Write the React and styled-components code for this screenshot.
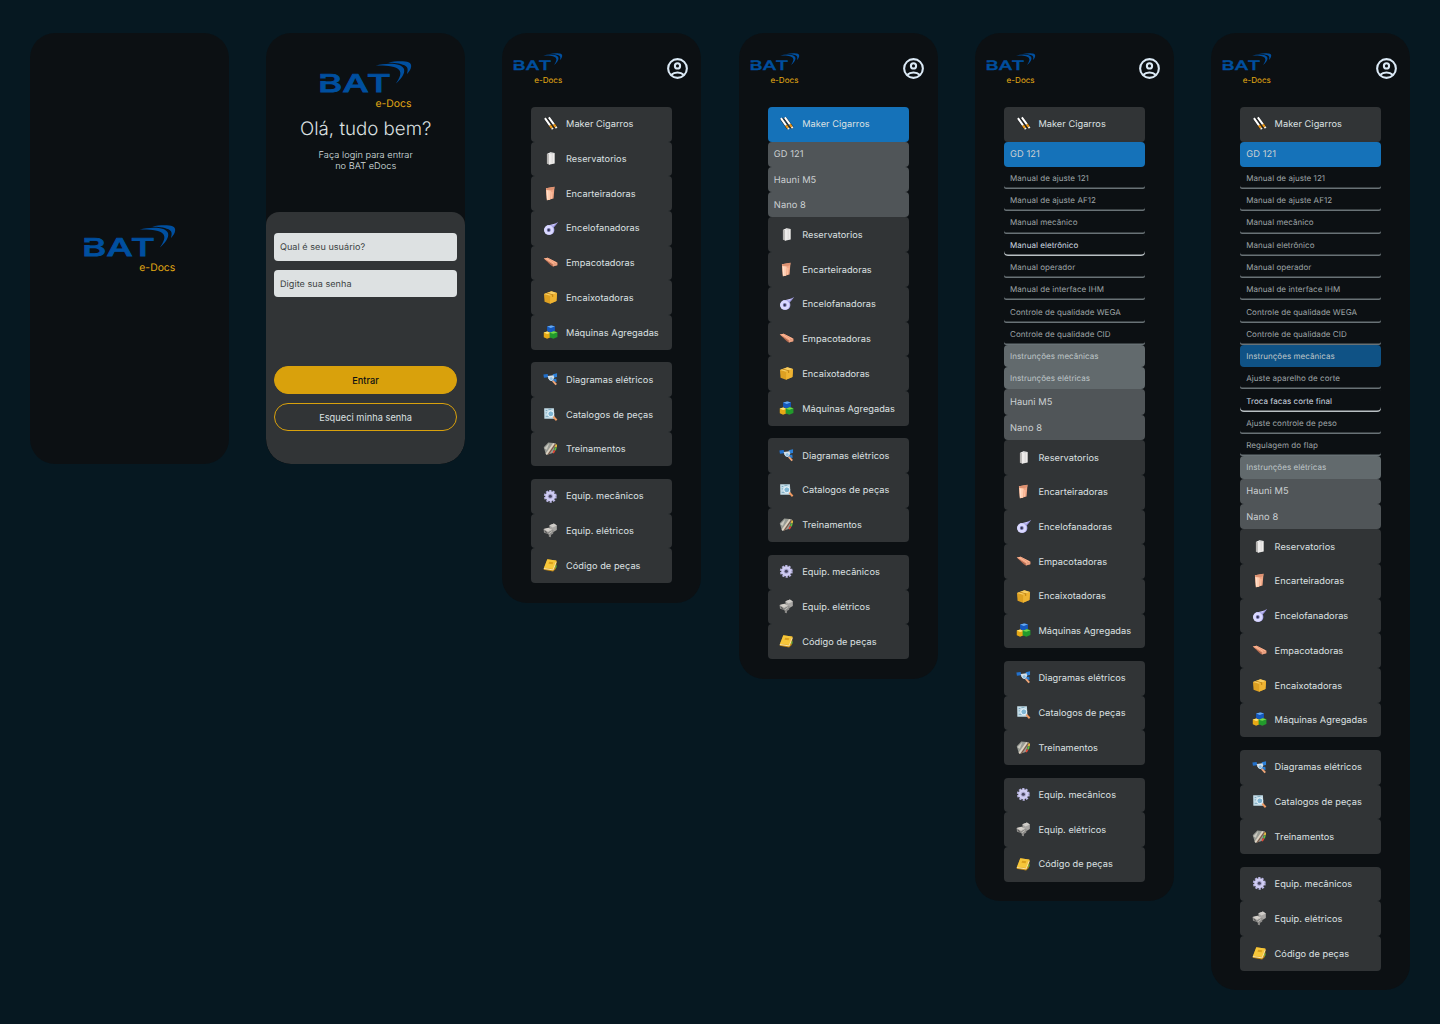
import React from "react";
import styled, { createGlobalStyle } from "styled-components";

const Global = createGlobalStyle`
  *, *::before, *::after { box-sizing: border-box; }
  body { margin: 0; background: #061821; }
  button { font: inherit; letter-spacing: inherit; }
`;

const Board = styled.main`
  width: 1440px;
  height: 1024px;
  padding: 33px 0 0 30px;
  display: flex;
  align-items: flex-start;
  gap: 37.2px;
  overflow: hidden;
  background: #061821;
  font-family: Inter, "Liberation Sans", sans-serif;
  font-size: 9.5px;
  letter-spacing: 0.05px;
  color: #dde1e2;
  text-rendering: geometricPrecision;
`;

const Phone = styled.section`
  flex: none;
  width: 199px;
  height: ${(p) => (p.$h ? `${p.$h}px` : "auto")};
  border-radius: 25px;
  background: #0c1013;
  overflow: hidden;
  display: flex;
  flex-direction: column;
`;

const Brand = styled.div`
  display: flex;
  flex-direction: column;
  align-items: flex-end;
  width: ${(p) => p.$w}px;
  margin: ${(p) => p.$margin || "0"};
  svg { display: block; overflow: visible; }
`;

const BrandName = styled.span`
  color: #e3aa14;
  font-size: ${(p) => p.$size}px;
  line-height: ${(p) => p.$lh}px;
  margin-top: ${(p) => p.$top}px;
  margin-right: 0.5px;
  letter-spacing: 0;
`;

const Hero = styled.div`
  height: 178.6px;
  text-align: center;
`;

const Title = styled.h1`
  margin: 7.9px 0 0;
  font-size: 18.7px;
  line-height: 24px;
  font-weight: 300;
  letter-spacing: 0;
`;

const Lead = styled.p`
  margin: 8.6px 0 0;
  font-size: 9.2px;
  line-height: 11px;
  font-weight: 300;
`;

const LoginPanel = styled.form`
  flex: 1;
  padding: 21.7px 8px 0 7.8px;
  border-radius: 13px 13px 25px 25px;
  background: #313436;
  display: flex;
  flex-direction: column;
`;

const Field = styled.div`
  height: 27.6px;
  margin-bottom: 9px;
  padding: 1.4px 6px 0;
  display: flex;
  align-items: center;
  border-radius: 4px;
  background: #dde1e2;
  color: #3a3f41;
  font-size: 9.05px;
`;

const Pill = styled.button`
  height: 27.8px;
  margin: ${(p) => p.$top}px 0 0;
  padding: 0;
  border: 1px solid #d9a10c;
  border-radius: 14px;
  background: ${(p) => (p.$filled ? "#d9a10c" : "transparent")};
  color: ${(p) => (p.$filled ? "#0c1013" : "#dde1e2")};
  font-size: 9.2px;
  font-weight: ${(p) => (p.$filled ? 500 : 400)};
`;

const TopBar = styled.header`
  height: 73.8px;
  padding: 20px 11.3px 0 11px;
  display: flex;
  align-items: flex-start;
  justify-content: space-between;
`;

const UserIcon = styled.svg`
  margin-top: 3px;
  display: block;
`;

const Menu = styled.nav`
  width: 141px;
  margin: 0 0 19.5px 29.1px;
  display: flex;
  flex-direction: column;
  gap: 12.5px;
`;

const Group = styled.div`
  display: flex;
  flex-direction: column;
`;

const Category = styled.div`
  height: 34.72px;
  padding-left: 11.7px;
  display: flex;
  align-items: center;
  gap: 7.3px;
  border-radius: 4px;
  background: ${(p) => (p.$active ? "#1572b9" : "#313436")};
  font-size: 9.2px;
  svg { flex: none; }
`;

const CategoryName = styled.span`
  padding-top: 1.3px;
`;

const Machine = styled.div`
  height: 25.3px;
  padding: 1.4px 0 0 6.2px;
  display: flex;
  align-items: center;
  border-radius: 4px;
  background: ${(p) => (p.$active ? "#1572b9" : "#505558")};
  color: #cbd0d2;
  font-size: 9.3px;
`;

const Doc = styled.div`
  height: 22.27px;
  padding-left: 6.2px;
  display: flex;
  align-items: center;
  border-radius: ${(p) => (p.$bg || p.$on ? 4 : 2)}px;
  box-shadow: ${(p) => (p.$bg ? "none" : `inset 0 -1.5px 0 ${p.$on ? "#b9c0c3" : "#697276"}`)};
  background: ${(p) => p.$bg || "transparent"};
  color: ${(p) => (p.$on ? "#d0dce2" : p.$bg ? "#bfc6c8" : "#9fa5a7")};
  font-size: 8px;
`;

const BLUE = "#004f9f";

function Logo({ width }) {
  return (
    <svg width={width} height={width * 0.345} viewBox="161 92 278 96" aria-label="BAT">
      <text
        transform="translate(0 185.5) scale(1.5 1)"
        x="105 154.2 203.2"
        fill={BLUE}
        stroke={BLUE}
        strokeWidth="2.4"
        fontFamily="Inter, sans-serif"
        fontWeight="500"
        fontSize="74"
      >
        BAT
      </text>
      <path d="M158 145h24v7h-24z" fill="#0c1013" />
      <path
        d="M331 106C355 99 385 98 402 104C424 112 424 132 392 160C404 142 410 129 402 119C392 107 360 105 331 106z"
        fill={BLUE}
      />
      <path
        d="M369 97C390 92 420 92 430 96C443 101 440 117 425 132C430 118 428 110 418 105C405 98 385 97 369 97z"
        fill={BLUE}
      />
    </svg>
  );
}

function BigBrand({ margin }) {
  return (
    <Brand $w={92.5} $margin={margin}>
      <Logo width={92.5} />
      <BrandName $size={10.4} $lh={12} $top={4.7}>e-Docs</BrandName>
    </Brand>
  );
}

const drawings = {
  cigar: (
    <>
      <path d="M3.2 3.4l7.6 10.8M6.8 2.6l8 11" stroke="#1c1d1e" strokeWidth="3.2" />
      <path d="M3 3.2l5.2 7.4M7 2.4l5.2 7.2" stroke="#fff" strokeWidth="2.1" />
      <path d="M8.2 10.6l2 2.8M12.2 9.6l1.8 2.5" stroke="#ef9b18" strokeWidth="2.3" />
      <path d="M10.2 13.4l.8 1.2M14 12.1l1 1.4" stroke="#f5efe4" strokeWidth="2.1" />
    </>
  ),
  book: (
    <>
      <path d="M5 4l3-1v12l-3-1z" fill="#b5b4b2" />
      <path d="M7 3.6l6-.6v10.8l-6 1.4z" fill="#eeeceb" />
      <path d="M5 4l3.6-1.7 4.4.7-5.5.8z" fill="#fff" />
      <path d="M10.4 3.6v10.6" stroke="#d2d0ce" strokeWidth=".7" />
    </>
  ),
  carton: (
    <>
      <path d="M4 3.2l8.8-1.4-1 12L5 15.6z" fill="#f0a585" />
      <path d="M4 3.2l5 1-.6 11L5 15.6z" fill="#ffcdb0" />
      <path d="M4 3.2l8.8-1.4-.3 2.4L9 5.6 4.1 4.8z" fill="#dd9171" />
      <path d="M5.8 6v8.6" stroke="#ffe3d0" strokeWidth="1" />
      <path d="M10.2 7l-.5 7" stroke="#ffc5a6" strokeWidth="1" />
    </>
  ),
  tape: (
    <>
      <path d="M5 5.4l6-.6L16.6 2l-3.4 4.4-2 1.8z" fill="#a09be0" />
      <path d="M8 5l6-1.4-2.4 2.4z" fill="#cfccff" />
      <circle cx="7.6" cy="10.2" r="5.1" fill="#aaa6e8" />
      <circle cx="6.9" cy="10.3" r="4.9" fill="#dad9ff" />
      <circle cx="6.9" cy="10.3" r="2" fill="#7774b3" />
      <circle cx="6.9" cy="10.3" r="1.1" fill="#303346" />
    </>
  ),
  pack: (
    <>
      <path d="M1.8 4.6l4-.9L15.8 9v2.6l-4.6 1.2L9 11.6z" fill="#b56b50" />
      <path d="M1.8 4.6l4-.9 9.8 5.1-4.6 1.8z" fill="#ffb794" />
      <path d="M3 5l8 4.8M5.4 4.2l7.8 5" stroke="#e0906f" strokeWidth=".7" />
      <path d="M11 10.6l4.6-1.8v2.7l-4.4 1.2z" fill="#e9a283" />
    </>
  ),
  box: (
    <>
      <path d="M2 5l7.6-2.6L15.4 4l-.6 8.4-6.6 2.8L2.6 13z" fill="#dda022" />
      <path d="M2 5l7.6-2.6L15.4 4 8.4 6.8z" fill="#f7cd62" />
      <path d="M8.4 6.8l7-2.8-.6 8.4-6.6 2.8z" fill="#eeb332" />
      <path d="M5 3.9l6.4 1.7.1 2.2-1 .4V6.1L4.2 4.3z" fill="#b87a0d" />
    </>
  ),
  cubes: (
    <>
      <path d="M5.2 2.6l4.2-1.2 3.8 1v5L9 9 5.2 7.4z" fill="#1559bd" />
      <path d="M5.2 2.6l4.2-1.2 3.8 1L9 4z" fill="#66aaf2" />
      <path d="M1.8 8.8l3.6-1.2 3.4 1.6v4.4L5.2 15l-3.4-1.4z" fill="#e7a915" />
      <path d="M1.8 8.8l3.6-1.2 3.4 1.6-3.6 1z" fill="#ffe274" />
      <path d="M7.8 9l4.2-1.6 3.8 1v5L11.6 15l-3.8-1.4z" fill="#229a2c" />
      <path d="M7.8 9l4.2-1.6 3.8 1-4.2 1.6z" fill="#77d94c" />
    </>
  ),
  diagram: (
    <>
      <path d="M1.4 3.6l4.4-.6.6 3.4L2 7z" fill="#2270cc" />
      <path d="M11 3.2l4.4-.8v3.8l-4.4.6z" fill="#2d80d8" />
      <path d="M5.8 5l6-.6.8 2.4-2.4 3.4-3.6-2z" fill="#d3dde5" />
      <path d="M10 8.2l4.6-.2.4 3-4 .2z" fill="#2b7dd2" />
      <circle cx="9.4" cy="7.8" r="2" fill="#8ebfe4" stroke="#e3eaf0" strokeWidth=".7" />
      <path d="M11 10.2l3.6 3.8" stroke="#f0a678" strokeWidth="1.9" />
    </>
  ),
  catalog: (
    <>
      <path d="M2.2 2.2h10l.6 10.8H2.4z" fill="#c3dce8" />
      <path d="M3.8 4.6h1.6M3.8 7h1.2M3.8 10.6h3M6.6 3.4h3" stroke="#6799b2" strokeWidth=".8" />
      <circle cx="9" cy="8" r="3" fill="#7fb5d3" stroke="#f1f7fa" strokeWidth=".9" />
      <path d="M11.6 10.8l3.4 3.8" stroke="#f09a62" strokeWidth="2" />
    </>
  ),
  training: (
    <>
      <path d="M1.8 7.4l4.6-4.8L14.4 3.4 11 13.4l-6.8 2z" fill="#989b94" />
      <path d="M2.4 8.4l5-5L5 10z" fill="#c9c8c0" />
      <path d="M4.4 14.6l7.8-11" stroke="#ded3c2" strokeWidth="1.8" />
      <path d="M6.4 14.8l7.6-11" stroke="#7b5540" strokeWidth="1.1" />
      <path d="M14.6 4.6l-.4 3" stroke="#f2c743" strokeWidth="1.7" />
      <path d="M14.2 7.6l-1 3" stroke="#62bf44" strokeWidth="1.8" />
      <path d="M13 10.6l-1.6 2.8" stroke="#e84735" strokeWidth="1.7" />
    </>
  ),
  gear: (
    <>
      <circle cx="8.5" cy="8.5" r="5.3" stroke="#b9b5e2" strokeWidth="2.6" strokeDasharray="2.1 1.23" />
      <circle cx="8.5" cy="8.5" r="5.1" fill="#cfccf2" />
      <circle cx="8.5" cy="8.5" r="2.6" fill="#aaa6cf" />
      <circle cx="8.5" cy="8.5" r="1.6" fill="#45445e" />
    </>
  ),
  motor: (
    <>
      <path d="M7.6 3.4l4.6-2 3 2.2v4.6l-4 2.4-3.6-2.4z" fill="#a8a6a3" />
      <path d="M7.6 3.4l4.6-2 3 2.2-4.4 2z" fill="#cfccc8" />
      <path d="M1.6 7.2l5-1.4L12 8.6l-.6 3.4-2 1-.4 2.6-2-.4v-2.6L2 11z" fill="#8b8a88" />
      <path d="M1.6 7.2l5-1.4 3.6 2-4.4 2.2z" fill="#d4d0ca" />
      <path d="M5.8 10l4.4-2.2M6.6 12.4l4-3" stroke="#c6c3be" strokeWidth=".9" />
      <path d="M3 9.6l1.8 1.2" stroke="#4b4b4b" />
    </>
  ),
  code: (
    <>
      <path d="M5.4 2.4l9.8 1.4-1.2 8.6-2.6 2.4-9.8-1.8z" fill="#c58a12" />
      <path d="M5.4 2.4l9.2 1.2-3 8.8-9.8-1z" fill="#f6c63a" />
      <path d="M1.8 11.8l9.6 1.4 3.2-8.4" stroke="#fff0be" strokeWidth=".9" />
      <path d="M7.4 4.8l4.2.5-.8 2.1-4.2-.5z" fill="#dba11d" />
      <path d="M14.6 8.6l-.6 2.6" stroke="#61b83d" strokeWidth="1.2" />
    </>
  ),
};

const mainItems = [
  ["book", "Reservatorios"],
  ["carton", "Encarteiradoras"],
  ["tape", "Encelofanadoras"],
  ["pack", "Empacotadoras"],
  ["box", "Encaixotadoras"],
  ["cubes", "Máquinas Agregadas"],
];
const docItems = [
  ["diagram", "Diagramas elétricos"],
  ["catalog", "Catalogos de peças"],
  ["training", "Treinamentos"],
];
const equipItems = [
  ["gear", "Equip. mecânicos"],
  ["motor", "Equip. elétricos"],
  ["code", "Código de peças"],
];
const manuals = [
  "Manual de ajuste 121",
  "Manual de ajuste AF12",
  "Manual mecânico",
  "Manual eletrônico",
  "Manual operador",
  "Manual de interface IHM",
  "Controle de qualidade WEGA",
  "Controle de qualidade CID",
];
const mechanics = [
  "Ajuste aparelho de corte",
  "Troca facas corte final",
  "Ajuste controle de peso",
  "Regulagem do flap",
];

function CategoryRow({ icon, label, active }) {
  return (
    <Category $active={active}>
      <svg width="15.6" height="15.6" viewBox="1 1 16 16" fill="none">{drawings[icon]}</svg>
      <CategoryName>{label}</CategoryName>
    </Category>
  );
}

const rows = (items) => items.map(([icon, label]) => <CategoryRow key={label} icon={icon} label={label} />);

function MenuScreen({ active, children }) {
  return (
    <Phone>
      <TopBar>
        <Brand $w={49.4}>
          <Logo width={49.4} />
          <BrandName $size={8.1} $lh={10} $top={4.6}>e-Docs</BrandName>
        </Brand>
        <UserIcon width="25" height="25" viewBox="0 0 24 24" fill="none" stroke="#dbe9f5" strokeWidth="2">
          <circle cx="12" cy="12" r="9" />
          <circle cx="12" cy="9.5" r="2.5" />
          <path d="M5.8 18.2c3.4-3.1 9-3.1 12.4 0" />
        </UserIcon>
      </TopBar>
      <Menu>
        <Group>
          <CategoryRow icon="cigar" label="Maker Cigarros" active={active} />
          {children}
          {rows(mainItems)}
        </Group>
        <Group>{rows(docItems)}</Group>
        <Group>{rows(equipItems)}</Group>
      </Menu>
    </Phone>
  );
}

const ManualList = ({ selected }) =>
  manuals.map((m) => <Doc key={m} $on={m === selected}>{m}</Doc>);

export default function App() {
  return (
    <>
      <Global />
      <Board>
        <Phone $h={430.7}>
          <BigBrand margin="192px 0 0 53.3px" />
        </Phone>

        <Phone $h={430.7}>
          <Hero>
            <BigBrand margin="28px 0 0 53.3px" />
            <Title>Olá, tudo bem?</Title>
            <Lead>Faça login para entrar<br />no BAT eDocs</Lead>
          </Hero>
          <LoginPanel>
            <Field>Qual é seu usuário?</Field>
            <Field>Digite sua senha</Field>
            <Pill type="button" $filled $top={59.9}>Entrar</Pill>
            <Pill type="button" $top={9}>Esqueci minha senha</Pill>
          </LoginPanel>
        </Phone>

        <MenuScreen />

        <MenuScreen active>
          <Machine>GD 121</Machine>
          <Machine>Hauni M5</Machine>
          <Machine>Nano 8</Machine>
        </MenuScreen>

        <MenuScreen>
          <Machine $active>GD 121</Machine>
          <ManualList selected="Manual eletrônico" />
          <Doc $bg="#626a6d">Instrunções mecânicas</Doc>
          <Doc $bg="#626a6d">Instrunções elétricas</Doc>
          <Machine>Hauni M5</Machine>
          <Machine>Nano 8</Machine>
        </MenuScreen>

        <MenuScreen>
          <Machine $active>GD 121</Machine>
          <ManualList />
          <Doc $bg="#0f5285">Instrunções mecânicas</Doc>
          {mechanics.map((m) => (
            <Doc key={m} $on={m === "Troca facas corte final"}>{m}</Doc>
          ))}
          <Doc $bg="#626a6d">Instrunções elétricas</Doc>
          <Machine>Hauni M5</Machine>
          <Machine>Nano 8</Machine>
        </MenuScreen>
      </Board>
    </>
  );
}
